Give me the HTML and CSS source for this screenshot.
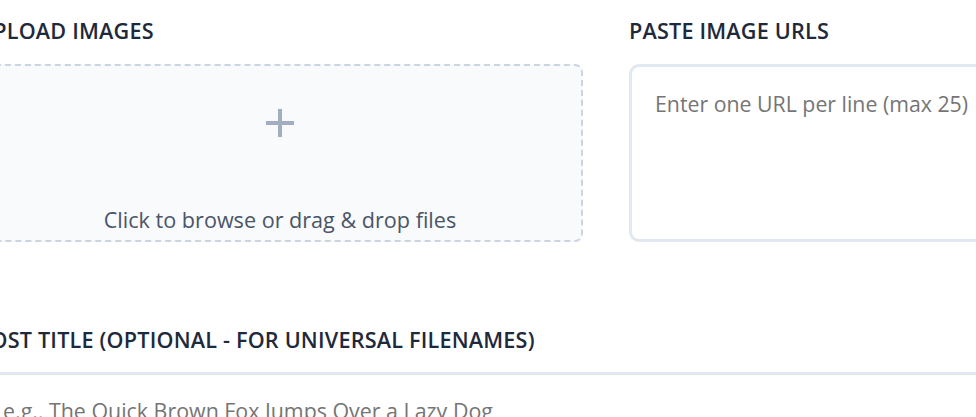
FILE: index.html
```html
<!DOCTYPE html>
<html lang="en">
<head>
    <meta charset="UTF-8">
    <meta name="viewport" content="width=device-width, initial-scale=1.0">
    <title>Image Uploader</title>
    <link rel="stylesheet" href="styles.css">
</head>
<body>

<div class="page">
    <div class="sources">
        <div class="field">
            <label class="field-label">Upload Images</label>
            <div class="dropzone">
                <svg class="plus" width="28" height="28" viewBox="0 0 28 28">
                    <path d="M14 0v28M0 14h28" stroke="#a0aec0" stroke-width="4" fill="none"/>
                </svg>
                <p class="drop-text">Click to browse or drag &amp; drop files</p>
            </div>
        </div>

        <div class="field">
            <label class="field-label" for="urls">Paste Image URLs</label>
            <textarea id="urls" class="url-box" placeholder="Enter one URL per line (max 25)"></textarea>
        </div>
    </div>

    <div class="field title-field">
        <label class="field-label" for="postTitle">Post Title (Optional - For Universal Filenames)</label>
        <input type="text" id="postTitle" class="title-input" placeholder="e.g., The Quick Brown Fox Jumps Over a Lazy Dog">
    </div>
</div>

</body>
</html>
```

FILE: styles.css
```css
body {
    margin: 0;
    font-family: "Open Sans", "Noto Sans", sans-serif;
    background-color: #fff;
    overflow: hidden;
}
.page {
    width: 1258px;
    margin-left: -23px;
    padding-top: 16px;
}
.sources {
    display: grid;
    grid-template-columns: 1fr 1fr;
    gap: 46px;
}
.field-label {
    display: block;
    font-size: 21.6px;
    line-height: 30px;
    font-weight: 600;
    letter-spacing: 0.2px;
    text-transform: uppercase;
    color: #1e293b;
    margin-bottom: 18px;
}
.dropzone {
    height: 178px;
    box-sizing: border-box;
    border: 2px dashed #cbd5e1;
    border-radius: 8px;
    background-color: #f8fafc;
    display: flex;
    flex-direction: column;
    align-items: center;
    padding-top: 43px;
}
.plus {
    display: block;
}
.drop-text {
    margin: 68px 0 0;
    font-size: 21.6px;
    line-height: 30px;
    color: #4a5568;
}
.url-box {
    display: block;
    width: 100%;
    height: 178px;
    box-sizing: border-box;
    border: 3px solid #e2e8f0;
    border-radius: 10px;
    padding: 22px 23px;
    font-family: inherit;
    font-size: 21.3px;
    line-height: 30px;
    resize: none;
    outline: none;
}
.url-box::placeholder, .title-input::placeholder {
    color: #757575;
}
.title-field {
    margin-top: 83px;
}
.title-field .field-label {
    margin-bottom: 17px;
}
.title-input {
    display: block;
    width: 100%;
    box-sizing: border-box;
    border: 3px solid #e2e8f0;
    border-radius: 10px;
    padding: 21px 23px;
    font-family: inherit;
    font-size: 21.4px;
    line-height: 30px;
    outline: none;
}
```
